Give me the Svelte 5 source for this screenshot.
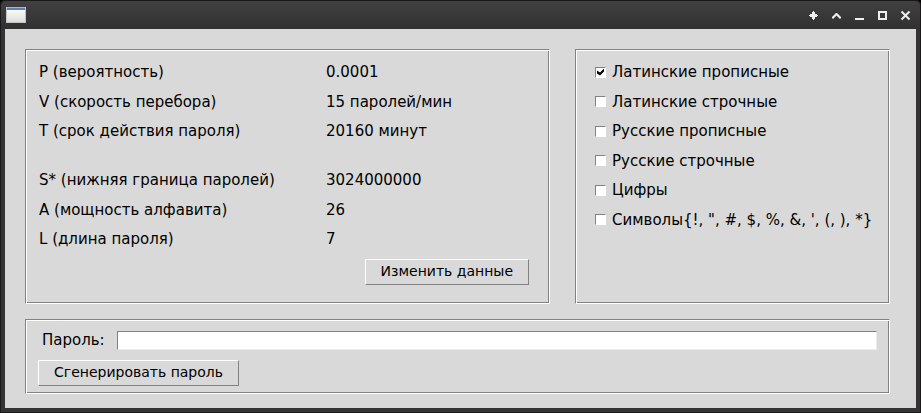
<script>
  const inputs = [
    { name: 'P (вероятность)', value: '0.0001' },
    { name: 'V (скорость перебора)', value: '15 паролей/мин' },
    { name: 'T (срок действия пароля)', value: '20160 минут' }
  ];
  const results = [
    { name: 'S* (нижняя граница паролей)', value: '3024000000' },
    { name: 'A (мощность алфавита)', value: '26' },
    { name: 'L (длина пароля)', value: '7' }
  ];
  let alphabets = $state([
    { name: 'Латинские прописные', on: true },
    { name: 'Латинские строчные', on: false },
    { name: 'Русские прописные', on: false },
    { name: 'Русские строчные', on: false },
    { name: 'Цифры', on: false },
    { name: `Символы{!, ", #, $, %, &, ', (, ), *}`, on: false }
  ]);
  let password = $state('');
</script>

<div class="window">
  <header>
    <svg class="app-icon" width="20" height="16" viewBox="0 0 20 16" shape-rendering="crispEdges" aria-hidden="true">
      <defs>
        <linearGradient id="sheet" x1="0" y1="0" x2="0" y2="1">
          <stop offset="0" stop-color="#ffffff" />
          <stop offset="1" stop-color="#deded8" />
        </linearGradient>
      </defs>
      <rect width="20" height="16" fill="#c4c5c2" />
      <rect x="1" y="1" width="18" height="14" fill="url(#sheet)" />
      <rect x="1" width="18" height="3" fill="#5b80b6" />
      <rect x="1" width="18" height="1" fill="#a3b5cf" />
    </svg>
    <div class="controls">
      <button aria-label="На всех рабочих столах">
        <svg width="11" height="11" viewBox="0 0 11 11"><path d="M5 1h1v1h1v2h2v1h1v1h-1v1h-2v2h-1v1h-1v-1h-1v-2h-2v-1h-1v-1h1v-1h2v-2h1z" fill="#eeeeec" /></svg>
      </button>
      <button aria-label="Свернуть в заголовок">
        <svg width="11" height="11" viewBox="0 0 11 11"><path d="M1 7 5 3h1l4 4v1L9 9 5.500 5.500 2 9 1 8z" fill="#eeeeec" /></svg>
      </button>
      <button aria-label="Свернуть">
        <svg width="11" height="11" viewBox="0 0 11 11"><path d="M1 8h9v2H1z" fill="#eeeeec" /></svg>
      </button>
      <button aria-label="Развернуть">
        <svg width="11" height="11" viewBox="0 0 11 11"><path d="M2 2h7v7H2z" fill="none" stroke="#eeeeec" stroke-width="2" /></svg>
      </button>
      <button aria-label="Закрыть">
        <svg width="11" height="11" viewBox="0 0 11 11"><path d="M1.500 1.500l8 8M9.500 1.500l-8 8" fill="none" stroke="#eeeeec" stroke-width="2" /></svg>
      </button>
    </div>
  </header>

  <main>
    <div class="top">
      <section class="panel data">
        {#each [inputs, results] as group}
          <dl>
            {#each group as row}
              <div class="row"><dt>{row.name}</dt><dd>{row.value}</dd></div>
            {/each}
          </dl>
        {/each}
        <button class="push edit">Изменить данные</button>
      </section>

      <section class="panel sets">
        <div class="checks">
          {#each alphabets as item}
            <label><input type="checkbox" bind:checked={item.on} />{item.name}</label>
          {/each}
        </div>
      </section>
    </div>

    <section class="panel output">
      <div class="field">
        <label for="password">Пароль:</label>
        <input id="password" type="text" bind:value={password} />
      </div>
      <button class="push generate">Сгенерировать пароль</button>
    </section>
  </main>
</div>

<style>
  :global(body) {
    background: #000;
  }
  .window {
    box-sizing: border-box;
    min-height: 100vh;
    display: flex;
    flex-direction: column;
    padding: 0 4px 4px;
    border: 1px solid #1a1819;
    border-top: 0;
    border-radius: 5px 5px 0 0;
    background: #333434;
    color: #000;
    font: 15px/20px "DejaVu Sans", sans-serif;
  }
  header {
    box-sizing: border-box;
    height: 29px;
    margin: 0 -4px;
    padding: 0 3px 0 5px;
    display: flex;
    align-items: center;
    justify-content: space-between;
    border-top: 1px solid #1a1819;
    border-radius: 5px 5px 0 0;
    background: linear-gradient(#414141, #303030);
  }
  .app-icon {
    display: block;
  }
  .controls {
    display: flex;
  }
  .controls button {
    box-sizing: border-box;
    width: 23px;
    height: 22px;
    padding: 1px 0 0;
    border: 0;
    background: none;
    display: grid;
    place-items: center;
  }
  .controls svg {
    display: block;
  }
  main {
    flex: 1;
    display: flex;
    flex-direction: column;
    gap: 15px;
    padding: 20px 26px 14px 20px;
    background: #d9d9d9;
  }
  .top {
    flex: 1;
    display: grid;
    grid-template-columns: 5fr 3fr;
    gap: 25px;
  }
  .panel {
    box-sizing: border-box;
    border: 1px solid;
    border-color: #828282 #fff #fff #828282;
    box-shadow: inset 1px 1px #fff, inset -1px -1px #828282;
  }
  .data {
    display: flex;
    flex-direction: column;
    padding: 12px 20px 18px 13px;
  }
  dl {
    display: flex;
    flex-direction: column;
    justify-content: space-between;
    height: 79px;
    margin: 0;
  }
  dl + dl {
    margin-top: 29px;
  }
  .row {
    display: grid;
    grid-template-columns: 287px 1fr;
  }
  dt,
  dd {
    margin: 0;
  }
  .push {
    box-sizing: border-box;
    height: 26px;
    padding: 0 15px 2px;
    border: 1px solid;
    border-color: #fff #828282 #828282 #fff;
    border-radius: 0;
    background: #d9d9d9;
    color: #000;
    font: 14px/20px "DejaVu Sans", sans-serif;
  }
  .edit {
    align-self: flex-end;
    margin-top: 10px;
  }
  .sets {
    padding: 12px 8px 12px 19px;
  }
  .checks {
    display: flex;
    flex-direction: column;
    justify-content: space-between;
    height: 168px;
  }
  .checks label {
    display: flex;
    align-items: center;
    gap: 6px;
    white-space: nowrap;
  }
  .checks input {
    appearance: none;
    box-sizing: border-box;
    flex: none;
    display: grid;
    place-items: center;
    width: 11px;
    height: 11px;
    margin: 0;
    border: 1px solid;
    border-color: #828282 #fff #fff #828282;
    background: #fff;
  }
  .checks input:checked::before {
    content: "";
    width: 7px;
    height: 7px;
    background: #000;
    clip-path: polygon(0 29%, 43% 57%, 100% 0, 100% 43%, 43% 100%, 0 72%);
  }
  .output {
    padding: 10px 12px 7px;
    display: flex;
    flex-direction: column;
    align-items: flex-start;
    gap: 10px;
  }
  .field {
    align-self: stretch;
    display: flex;
    align-items: center;
    gap: 12px;
    padding-left: 4px;
  }
  .field input {
    box-sizing: border-box;
    flex: 1;
    min-width: 0;
    height: 19px;
    padding: 0 3px;
    border: 1px solid;
    border-color: #828282 #ececec #ececec #828282;
    border-radius: 0;
    background: #fff;
    font: inherit;
  }
</style>
